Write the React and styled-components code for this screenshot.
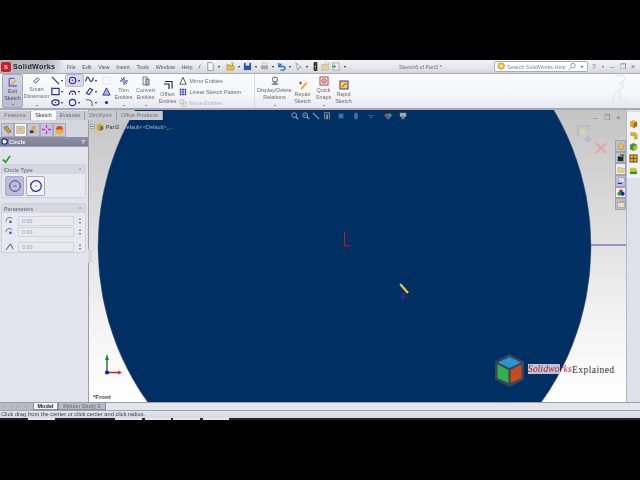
import React from "react";
import styled, { createGlobalStyle } from "styled-components";

const Global = createGlobalStyle`
  html, body { margin: 0; padding: 0; background: #000; }
  * { box-sizing: border-box; }
`;

const Screen = styled.div`
  width: 640px; height: 480px; background: #000; padding: 60px 0;
  font-family: "Liberation Sans", Arial, sans-serif; overflow: hidden;
`;
const Win = styled.div`
  height: 360px; display: flex; flex-direction: column; background: #d9dbe6; color: #4a4a55;
`;

/* ---------- title bar ---------- */
const TitleBar = styled.div`
  height: 14px; flex: none; display: flex; align-items: center; position: relative;
  background: linear-gradient(#f3f4f8, #e3e4ec 60%, #d4d5df);
  border-bottom: 1px solid #a9abb6; filter: blur(.25px);
  & > * { flex: none; }
`;
const Logo = styled.div`
  width: 63px; height: 13px; display: flex; align-items: center; gap: 2px; padding-left: 1px;
  background: linear-gradient(90deg, #b5b5bb, #bbbcc3 75%, #e4e5ec);
  font-weight: 700; font-size: 7.2px; letter-spacing: .3px; color: #2a2a30;
`;
const LogoMark = styled.span`
  width: 10px; height: 10px; background: #c6242a; border-radius: 2px; color: #fff; flex: none;
  font: 700 7px "Liberation Serif", serif; text-align: center; line-height: 10px;
`;
const Menu = styled.div`
  display: flex; margin-left: 4px; font-size: 5.4px; color: #56565f; gap: 6.6px; width: 127.5px;
`;
const QuickBar = styled.div`
  display: flex; align-items: center; height: 13px;
`;
const QuickIcon = styled.span`
  display: inline-flex; flex: none; width: ${p => p.$w || 9}px; height: 11px; align-items: center; justify-content: ${p => p.$start ? "flex-end" : "center"};
  margin-left: ${p => p.$ml || 0}px; padding-right: ${p => p.$start ? 2 : 0}px;
`;
const Arrow = styled.i`
  display: inline-block; flex: none; width: 0; height: 0; border: 1px solid transparent; border-top: 2px solid #222;
  margin: 2px 3px 0;
`;
const DocTitle = styled.div`
  font-size: 5.3px; color: #70707a; margin-left: 50.5px; width: 95px; white-space: nowrap;
`;
const Search = styled.div`
  width: 94px; height: 11px; background: #fff; border: 1px solid #a9acb9; border-radius: 2px;
  display: flex; align-items: center; gap: 2px; padding: 0 1px 0 2px; font-size: 5.4px; color: #85858f;
`;
const SearchText = styled.span` flex: 1; white-space: nowrap; `;
const WinButtons = styled.div`
  display: flex; align-items: center; margin-left: 2px; font-size: 7px; color: #6c6c78; line-height: 1; white-space: nowrap;
`;
const WinBtn = styled.span`
  width: ${p => p.$w}px; text-align: center; font-size: ${p => p.$fs || 7}px; flex: none;
`;

/* ---------- ribbon ---------- */
const Ribbon = styled.div`
  height: 36px; flex: none; display: flex; position: relative; padding-left: 2px;
  background: linear-gradient(#fbfbfd, #f5f6fa 60%, #e7e8f0);
  border-bottom: 2px solid #a7a8b2; color: #6c6c76; font-size: 5.4px; filter: blur(.2px);
`;
const Tool = styled.div`
  width: ${p => p.$w}px; display: flex; flex-direction: column; align-items: center; text-align: center;
  line-height: 7px; padding-top: ${p => p.$low ? 6 : 2}px; flex: none; position: relative; margin-left: ${p => p.$ml || 0}px;
  & > svg { margin-bottom: 1px; }
  ${p => p.$active && `
    background: linear-gradient(#d4d6e6, #b9bcd2); border: 1px solid #a6a9c0; border-radius: 2px; padding-top: 1px; color:#4b4b58;
  `}
  ${p => p.$rule && `border-right: 1px solid #dcdde4;`}
`;
const ToolLabel = styled.span` display:block; white-space: nowrap; `;
const ToolDrop = styled.i`
  position: absolute; bottom: 1px; left: 50%; margin-left: -1px; width: 0; height: 0;
  border: 1.2px solid transparent; border-top: 1.6px solid #333;
`;
const SketchGrid = styled.div`
  width: 64.5px; display: grid; grid-template-columns: 17px 17px 17px 13.5px; grid-auto-rows: 11px; padding-top: 1px; flex:none;
`;
const SketchCell = styled.div`
  display: flex; align-items: center; gap: 0; padding-left: 2px;
  ${p => p.$on && `background:#d6d9e8; outline: 1px solid #b6b9cc; border-radius:1px;`}
  & > i { margin: 2px 0 0 1px; }
`;
const Side = styled.div`
  width: 72px; flex: none; display: grid; grid-auto-rows: 11px; padding-top: 1px; position: relative; margin-left: 1px;
`;
const SideRow = styled.div`
  display: flex; align-items: center; gap: 3px; white-space: nowrap; color: ${p => p.$off ? "#b4b4bc" : "#6a6a75"};
`;
const DsMark = styled.div`
  position: absolute; right: 7px; top: 0; width: 30px; height: 34px;
`;

/* ---------- middle ---------- */
const Middle = styled.div` flex: 1; display: flex; min-height: 0; position: relative; `;
const Panel = styled.div`
  width: 88px; flex: none; background: #e2e3ec; display: flex; flex-direction: column; position: relative; filter: blur(.2px);
`;
const TabsOver = styled.div`
  position: absolute; left: 0; top: 1px; height: 9px; width: 163px; background: #c9cad2; display: flex; z-index: 3;
  font-size: 5.4px; color: #70707a; filter: blur(.2px);
`;
const MgrTab = styled.div`
  height: 9px; line-height: 9px; text-align:center; white-space: nowrap;
  ${p => p.$on ? "background:#fbfbfd;color:#33333b;font-weight:400;" : "border-right:1px solid #9fa0aa;"}
  width: ${p => p.$w}px;
`;
const MgrIcons = styled.div`
  margin-top: 10px; height: 17px; display: flex; align-items: center; padding: 2px 1px 0; background: #d5d6e0;
`;
const MgrIcon = styled.div`
  width: 13px; height: 14px; display: flex; align-items: center; justify-content: center; background: #c6c7d6;
  border: 1px solid #a9aabb;
  ${p => p.$on && "background:#f4f4f8;"}
`;
const PanelHead = styled.div`
  height: 10px; background: linear-gradient(#8f90a3, #7e7f94); display: flex; align-items: center; gap: 1px;
  font-size: 6px; font-weight: 700; color: #f2f2f6; padding: 0 3px 0 1px; justify-content: space-between; border-bottom: 1px solid #9c9dad;
`;
const HeadLeft = styled.span` display:flex; align-items:center; gap:1px; `;
const OkRow = styled.div` height: 17px; padding: 3px 2px; `;
const Group = styled.div`
  margin: 0 2px 5px 1px; height: ${p => p.$h}px; background: #e8e9f0; border: 1px solid #d0d1dc; border-radius: 2px;
`;
const GroupHead = styled.div`
  height: 9px; background: #d6d7e1; font-size: 5.4px; font-weight: 700; color: #7c7c88;
  display: flex; justify-content: space-between; align-items:center; padding: 0 3px 0 2px;
`;
const TypeRow = styled.div` display: flex; gap: 2px; padding: 2px 3px; `;
const TypeBtn = styled.div`
  width: 19px; height: 20px; border: 1px solid #a8aabf; border-radius: 2px; display:flex; align-items:center; justify-content:center;
  background: ${p => p.$on ? "#bcbfd6" : "#f2f2f7"};
`;
const ParamRow = styled.div`
  display: flex; align-items: center; height: ${p => p.$h || 11}px; padding-left: 3px; margin-top: ${p => p.$mt || 0}px;
`;
const ParamIcon = styled.div` width: 13px; display:flex; `;
const ParamInput = styled.div`
  width: 56px; height: 10px; background: #e9e9ef; border: 1px solid #d3d4dc; font-size: 5.4px; color: #9a9aa4; line-height: 8px; padding-left: 3px;
`;
const Spin = styled.div`
  margin-left: 3px; font-size: 4px; line-height: 4px; color: #666; text-align: center; width: 6px;
`;
const Splitter = styled.div`
  width: 1px; background: #9b9ca6; flex: none; position: relative;
`;
const Grip = styled.div`
  position: absolute; left: 0; top: 139px; width: 4px; height: 14px; background: #d8d9e0;
  border-radius: 0 2px 2px 0; z-index: 2;
`;

const Canvas = styled.div`
  flex: 1; position: relative; overflow: hidden; background: linear-gradient(#c4c4c4 0%, #dedede 40%, #f2f2f2 70%, #fff 100%);
`;
const Shapes = styled.svg` position: absolute; left: 0; top: 0; `;
const Tree = styled.div`
  position: absolute; left: 1px; top: 12px; height: 9px; display:flex; align-items:center; gap: 1px; font-size: 5.4px; color: #aab4c4; z-index: 2; white-space: nowrap; filter: blur(.2px);
`;
const TreeName = styled.span` margin-left: 1px; color: #30303a; `;
const TreeConfig = styled.span` margin-left: 1px; `;
const HeadsUp = styled.div`
  position: absolute; top: 2px; left: 201px; display: flex; align-items: center; filter: blur(.25px);
`;
const HudIcon = styled.span` width: ${p => p.$w || 10.6}px; display:flex; justify-content:center; `;
const ViewButtons = styled.div`
  position: absolute; right: 2px; top: 3px; display: flex; font-size: 7px; color: #75757f; align-items:center; line-height: 9px;
`;
const ViewBtn = styled.span` width: 11.5px; text-align: center; `;
const RailTabs = styled.div`
  position: absolute; right: 0; top: 30px; width: 11px; display: flex; flex-direction: column; z-index: 2;
`;
const RailTab = styled.div`
  width: 11px; height: 11.7px; background: ${p => p.$on ? "#eceef4" : "#bcbfd0"}; border: 1px solid #9fa2b5; display:flex; align-items:center; justify-content:center;
`;
const FrontLabel = styled.div`
  position: absolute; left: 4px; bottom: 1px; font-size: 6px; font-weight: 700; color: #44444c; line-height: 8px;
`;
const Watermark = styled.div`
  position: absolute; left: 405px; top: 243px; display:flex; align-items:center; height: 34px;
`;
const MarkSolid = styled.span`
  font: italic 400 9.5px "Liberation Serif", serif; color: #c4152b; margin: -2px 0 0 3px; background: linear-gradient(90deg,#b9c6d8 72%,transparent 72%);
  letter-spacing: .15px; width: 44px; white-space: nowrap;
`;
const MarkWord = styled.span`
  font: 400 9.6px "Liberation Serif", serif; color: #333; letter-spacing: .4px; white-space: nowrap; margin-top: -2px;
`;

const TaskPane = styled.div`
  width: 14px; flex: none; background: #dfe1ea; border-left: 1px solid #b6b8c4; padding-top: 2px;
`;
const TaskStrip = styled.div`
  height: 66px; background: #f2f3f7; display: flex; flex-direction: column; align-items: center; padding-top: 6px;
`;
const TaskIcon = styled.div` height: 11.6px; display:flex; align-items:center; `;

/* ---------- bottom ---------- */
const BottomTabs = styled.div`
  height: 8px; flex: none; background: #e4e5ec; display: flex; border-top: 1px solid #9c9da8; font-size: 5.6px; filter: blur(.2px); padding-right: 14px;
`;
const Pager = styled.div` width: 33px; background: #b9bac4; color:#9a9aa6; font-size: 4px; line-height:7px; letter-spacing:2.2px; padding-left: 2px; `;
const BottomTab = styled.div`
  width: ${p => p.$w}px; text-align: center; line-height: 7px; white-space: nowrap;
  background: ${p => p.$on ? "#f6f6f9" : "#b9bac4"}; color: ${p => p.$on ? "#222" : "#666670"}; font-weight: ${p => p.$on ? 700 : 400};
  border: 1px solid #8d8e9a; border-top: 0;
`;
const Status = styled.div`
  height: 10px; flex: none; background: linear-gradient(#e3e4ec,#d6d7e1 80%); border-top: 1px solid #a0a1ac; font-size: 5.7px; color: #3f3f49;
  line-height: 7px; padding-left: 1px; white-space: nowrap; filter: blur(.2px); position: relative;
`;
const StatusCells = styled.div`
  position: absolute; left: 0; right: 0; bottom: 0; height: 2px; display:flex; background:#23242c;
`;
const StatusCell = styled.i` width: ${p => p.$w}px; margin-left: ${p => p.$ml}px; background: #e6e7ee; height: 2px; display:block; `;

/* ---------- drawn icons ---------- */
const Ic = ({ s = 9, children, vb = 10 }) => (
  <svg width={s} height={s} viewBox={`0 0 ${vb} ${vb}`} fill="none">{children}</svg>
);
const CircleCenter = ({ s = 9 }) => (
  <Ic s={s}><circle cx="5" cy="5" r="3.6" stroke="#23238f" strokeWidth="1.3" /><circle cx="5" cy="5" r="1" fill="#c63a46" /></Ic>
);
const Box3 = ({ a = "#e0b020", b = "#a86a10", s = 9 }) => (
  <Ic s={s}><path d="M1 3l4-2 4 2v5l-4 2-4-2z" fill={a} /><path d="M5 5l4-2v5l-4 2z" fill={b} /></Ic>
);
const Doc = ({ c = "#fff" }) => <Ic><path d="M2 .5h4l2 2v7H2z" fill={c} stroke="#8e8e98" /></Ic>;

const sketchIcons = [
  <Ic><path d="M1 1l8 8" stroke="#26269a" strokeWidth="1.2" /></Ic>,
  <CircleCenter />,
  <Ic><path d="M.5 6c2-6 3-6 4.500-2s3 2 4.500-2" stroke="#26269a" strokeWidth="1.200" /></Ic>,
  <Ic><rect x="1" y="1" width="8" height="8" stroke="#ccc" strokeDasharray="1 1" /></Ic>,
  <Ic><rect x="1" y="1.500" width="8" height="7" stroke="#26269a" strokeWidth="1.300" /><circle cx="1" cy="1.500" r=".9" fill="#c33" /></Ic>,
  <Ic><path d="M1.500 8.500a3.500 4 0 0 1 7 0" stroke="#26269a" strokeWidth="1.300" /><circle cx="5" cy="8" r="1" fill="#c33" /></Ic>,
  <Ic><path d="M1.500 7l4-5.500 3 1.500-4 5.500z" stroke="#26269a" strokeWidth="1.200" /></Ic>,
  <Ic><path d="M5 1l4 8H1z" stroke="#26269a" fill="#a9b7e0" /></Ic>,
  <Ic><ellipse cx="5" cy="5" rx="4" ry="3" stroke="#26269a" strokeWidth="1.300" /><circle cx="5" cy="5" r=".9" fill="#c33" /></Ic>,
  <Ic><circle cx="5" cy="5" r="3.500" stroke="#26269a" strokeWidth="1.200" /></Ic>,
  <Ic><path d="M1 2h3a4 4 0 0 1 4 4v3" stroke="#555" strokeWidth="1.100" /></Ic>,
  <Ic><circle cx="5" cy="5" r="1.800" fill="#2a2ac8" /></Ic>,
];

const App = () => (
  <Screen>
    <Global />
    <Win>
      <TitleBar>
        <Logo><LogoMark>S</LogoMark>SolidWorks</Logo>
        <Menu><span>File</span><span>Edit</span><span>View</span><span>Insert</span><span>Tools</span><span>Window</span><span>Help</span></Menu>
        <QuickBar>
          <QuickIcon $w={11} $start><Ic s={6}><path d="M5 1L2 4l1 1L1 8" stroke="#666" /></Ic></QuickIcon>
          <QuickIcon><Doc /></QuickIcon><Arrow />
          <QuickIcon $ml={3}><Ic><path d="M1 3h3l1 1h4v5H1z" fill="#e4c13a" stroke="#a58a1c" strokeWidth=".6" /><path d="M6 0l2 2-2 2" stroke="#3a9a3a" /></Ic></QuickIcon><Arrow />
          <QuickIcon><Ic><rect x="1" y="1" width="8" height="8" fill="#2d54a8" /><rect x="3" y="1" width="4" height="3" fill="#dfe6f4" /></Ic></QuickIcon><Arrow />
          <QuickIcon><Ic><rect x="1" y="4" width="8" height="4" fill="#a6a8b0" /><rect x="3" y="1" width="4" height="3" fill="#eee" stroke="#999" strokeWidth=".5" /></Ic></QuickIcon><Arrow />
          <QuickIcon><Ic><path d="M2 1v4h5M2 5l3-3M7 5a2 2 0 0 1 0 4H4" stroke="#1f6ec4" strokeWidth="1.500" /></Ic></QuickIcon><Arrow />
          <QuickIcon><Ic><path d="M2 1l6 5-3 .5L4 9z" fill="#f4f4f6" stroke="#777" strokeWidth=".7" /></Ic></QuickIcon><Arrow />
          <QuickIcon><Ic><rect x="3" y="0" width="4" height="10" rx="1" fill="#222" /><circle cx="5" cy="2" r="1" fill="#d22" /><circle cx="5" cy="5" r="1" fill="#db2" /><circle cx="5" cy="8" r="1" fill="#2a2" /></Ic></QuickIcon>
          <QuickIcon $w={11}><Ic><rect x="1" y="3" width="7" height="6" fill="#e8cf9a" stroke="#998" strokeWidth=".5" /><path d="M5 0h4v3H5z" fill="#f6efd8" stroke="#998" strokeWidth=".5" /></Ic></QuickIcon>
          <QuickIcon $w={10}><Ic><rect x="2" y="1" width="7" height="8" fill="#e8edf0" stroke="#7a9a8a" strokeWidth=".7" /><path d="M1 5h4M3 3l2 2-2 2" stroke="#2a9a4a" /></Ic></QuickIcon><Arrow />
        </QuickBar>
        <DocTitle>Sketch6 of Part3 *</DocTitle>
        <Search>
          <Ic><circle cx="5" cy="4.500" r="4" fill="#e8c23a" stroke="#a78a20" strokeWidth=".6" /><circle cx="5" cy="4.500" r="1.500" fill="#fff6c8" /></Ic>
          <SearchText>Search SolidWorks Help</SearchText>
          <Ic><circle cx="6" cy="4" r="2.800" stroke="#8a8a94" /><path d="M4 6L1 9" stroke="#8a8a94" strokeWidth="1.200" /></Ic>
          <Arrow />
        </Search>
        <WinButtons><WinBtn $w={8}>?</WinBtn><WinBtn $w={10} $fs={4}>▾</WinBtn><WinBtn $w={9}>–</WinBtn><WinBtn $w={12}>❐</WinBtn><WinBtn $w={8}>×</WinBtn></WinButtons>
      </TitleBar>

      <Ribbon>
        <Tool $w={21} $active>
          <Ic s={11}><path d="M2 2h5M2 2v7h7" stroke="#4a4ad0" strokeWidth="1" /><path d="M3 8l5-5 1 1-5 5z" fill="#e8b820" /></Ic>
          <ToolLabel>Exit</ToolLabel><ToolLabel>Sketch</ToolLabel><ToolDrop />
        </Tool>
        <Tool $w={25} $ml={1}>
          <Ic s={9}><path d="M2 6l4-4 2 2-4 4z" fill="#fff" stroke="#26269a" strokeWidth="1" /></Ic>
          <ToolLabel>Smart</ToolLabel><ToolLabel>Dimension</ToolLabel><ToolDrop />
        </Tool>
        <SketchGrid>
          {sketchIcons.map((ic, i) => (
            <SketchCell key={i} $on={i === 1}>{ic}{i % 4 !== 3 && <Arrow />}</SketchCell>
          ))}
        </SketchGrid>
        <Tool $w={20}>
          <Ic s={10}><path d="M1 5h8M5 1v8M2 2l6 6" stroke="#26269a" /><path d="M3 4h4v2H3z" fill="#9ab" /></Ic>
          <ToolLabel>Trim</ToolLabel><ToolLabel>Entities</ToolLabel><ToolDrop />
        </Tool>
        <Tool $w={24}>
          <Ic s={10}><path d="M2 1h4v8H2z" fill="#e8ecf6" stroke="#555" strokeWidth=".7" /><path d="M5 3h3v6H5z" fill="#bcd" stroke="#335" strokeWidth=".7" /></Ic>
          <ToolLabel>Convert</ToolLabel><ToolLabel>Entities</ToolLabel><ToolDrop />
        </Tool>
        <Tool $w={20} $low>
          <Ic s={10}><path d="M2 1.500h7v7M1 4h5v5" stroke="#222" strokeWidth="1.100" /></Ic>
          <ToolLabel>Offset</ToolLabel><ToolLabel>Entities</ToolLabel>
        </Tool>
        <Side>
          <SideRow><Ic s={8}><path d="M5 .5l4 8.500H1z" stroke="#333" fill="#fff" /></Ic>Mirror Entities</SideRow>
          <SideRow><Ic s={8}><path d="M1 1h2v2H1zM4 1h2v2H4zM7 1h2v2H7zM1 4h2v2H1zM4 4h2v2H4zM7 4h2v2H7zM1 7h2v2H1zM4 7h2v2H4zM7 7h2v2H7z" fill="#23238f" /></Ic>Linear Sketch Pattern</SideRow>
          <SideRow $off><Ic s={8}><rect x="1" y="1" width="5" height="5" stroke="#bbb" /><rect x="4" y="4" width="5" height="5" stroke="#bbb" /></Ic>Move Entities</SideRow>
        </Side>
        <Tool $w={4} $rule />
        <Tool $w={38} $ml={1}>
          <Ic s={10}><circle cx="5" cy="3.500" r="2.500" stroke="#555" /><path d="M1 9h8L6 6H4z" fill="#8a8a94" /></Ic>
          <ToolLabel>Display/Delete</ToolLabel><ToolLabel>Relations</ToolLabel><ToolDrop />
        </Tool>
        <Tool $w={18} $low>
          <Ic s={10}><path d="M1 3h3M2.500 1.500v3" stroke="#d22" strokeWidth="1" /><path d="M3 8l5-6 1.500 1-5 6-2 .5z" fill="#e8a820" /></Ic>
          <ToolLabel>Repair</ToolLabel><ToolLabel>Sketch</ToolLabel>
        </Tool>
        <Tool $w={22} $ml={1}>
          <Ic s={10}><rect x="1" y="1" width="8" height="8" fill="#fff" stroke="#a44" /><circle cx="5" cy="5" r="2.200" stroke="#c22" /><circle cx="5" cy="5" r=".7" fill="#333" /></Ic>
          <ToolLabel>Quick</ToolLabel><ToolLabel>Snaps</ToolLabel><ToolDrop />
        </Tool>
        <Tool $w={18} $low>
          <Ic s={10}><rect x="1" y="1" width="8" height="8" fill="#f4d440" stroke="#3a3aa0" /><path d="M3 7l4-4" stroke="#a33" /></Ic>
          <ToolLabel>Rapid</ToolLabel><ToolLabel>Sketch</ToolLabel>
        </Tool>
        <DsMark>
          <svg width="30" height="34" viewBox="0 0 30 34" fill="none">
            <path d="M12 2c10-2 12 2 7 7M15 9c8 1 7 5-2 9M12 18l-3 14M18 18c-4 5-2 7 3 8s4 5-4 6" stroke="#e6e7ee" strokeWidth="1.500" />
          </svg>
        </DsMark>
      </Ribbon>

      <Middle>
        <TabsOver>
          <MgrTab $w={31}>Features</MgrTab>
          <MgrTab $w={25} $on>Sketch</MgrTab>
          <MgrTab $w={29}>Evaluate</MgrTab>
          <MgrTab $w={32}>DimXpert</MgrTab>
          <MgrTab $w={46}>Office Products</MgrTab>
        </TabsOver>
        <Panel>
          <MgrIcons>
            <MgrIcon><Ic><path d="M1 3l3-2 5 6-3 2z" fill="#c9a030" stroke="#443" strokeWidth=".6" /></Ic></MgrIcon>
            <MgrIcon $on><Ic><rect x="1" y="2" width="8" height="7" fill="#f0d8a0" stroke="#776" strokeWidth=".6" /><path d="M3 4h4M3 6h4" stroke="#776" strokeWidth=".6" /></Ic></MgrIcon>
            <MgrIcon><Ic><path d="M3 1h4v4H3z" fill="#d9a820" /><path d="M1 6h4v3H1z" fill="#333" /><path d="M6 6h3v3H6z" fill="#bbb" /></Ic></MgrIcon>
            <MgrIcon><Ic><path d="M5 0v10M0 5h10" stroke="#c02ac0" strokeWidth="1.400" /><circle cx="5" cy="5" r="2" fill="#e6a0e6" /></Ic></MgrIcon>
            <MgrIcon><Ic><circle cx="5" cy="5" r="4" fill="#d43" /><path d="M1 5h8v1a4 4 0 0 1-8 0z" fill="#e8b820" /></Ic></MgrIcon>
          </MgrIcons>
          <PanelHead>
            <HeadLeft><Ic s={7}><circle cx="5" cy="5" r="3.800" stroke="#1d1d9a" strokeWidth="1.800" fill="#fff" /></Ic>Circle</HeadLeft><span>?</span>
          </PanelHead>
          <OkRow><Ic s={9}><path d="M1 5l3 3 5-7" stroke="#2f9e32" strokeWidth="2" /></Ic></OkRow>
          <Group $h={34}>
            <GroupHead>Circle Type<span>⌃</span></GroupHead>
            <TypeRow>
              <TypeBtn $on><Ic s={14}><circle cx="5" cy="5" r="3.800" stroke="#3c3cb0" strokeWidth=".7" /><path d="M4 5h2" stroke="#c03030" strokeWidth=".7" /></Ic></TypeBtn>
              <TypeBtn><Ic s={14}><circle cx="5" cy="5" r="3.800" stroke="#2222b0" strokeWidth=".8" /><circle cx="5" cy="5" r=".6" fill="#888" /><circle cx="1.500" cy="3.500" r=".7" fill="#c22" /><circle cx="8.800" cy="5" r=".7" fill="#2a2" /><circle cx="3" cy="8.500" r=".7" fill="#2a2" /></Ic></TypeBtn>
            </TypeRow>
          </Group>
          <Group $h={50}>
            <GroupHead>Parameters<span>⌃</span></GroupHead>
            <ParamRow $mt={2}><ParamIcon><Ic s={9}><path d="M1 6a4 4 0 0 1 7-3" stroke="#666" /><circle cx="6" cy="6.500" r="1.500" fill="#3a62c4" /></Ic></ParamIcon><ParamInput>0.00</ParamInput><Spin>▴<br />▾</Spin></ParamRow>
            <ParamRow><ParamIcon><Ic s={9}><path d="M1 6a4 4 0 0 1 7-3" stroke="#666" /><circle cx="6" cy="6.500" r="1.500" fill="#3a62c4" /></Ic></ParamIcon><ParamInput>0.00</ParamInput><Spin>▴<br />▾</Spin></ParamRow>
            <ParamRow $mt={4}><ParamIcon><Ic s={9}><path d="M1 9L6 2l3 6" stroke="#444" /></Ic></ParamIcon><ParamInput>0.00</ParamInput><Spin>▴<br />▾</Spin></ParamRow>
          </Group>
        </Panel>
        <Splitter><Grip /></Splitter>
        <Canvas>
          <Shapes width="538" height="292" viewBox="0 0 538 292" fill="none">
            <ellipse cx="255.500" cy="136.600" rx="246.500" ry="258.500" fill="#002f63" stroke="#4a5a78" strokeWidth=".5" />
            <path d="M502 135h36" stroke="#3b4fa0" strokeWidth="1" />
            <path d="M255.500 122v14h6" stroke="#c8142c" strokeWidth="1" />
            <path d="M312 175l7 8" stroke="#e8c030" strokeWidth="2.400" /><path d="M311 174l1.500 1.500" stroke="#bbb" strokeWidth="2" />
            <path d="M319.500 184l1 1" stroke="#222" strokeWidth="1.500" />
            <circle cx="314" cy="186" r="2.500" stroke="#1a2ab8" strokeWidth="1" />
            <path d="M314 183v5" stroke="#b52a2a" strokeWidth=".7" />
            {/* triad */}
            <path d="M18 262.500v-13" stroke="#2a7a2a" strokeWidth="1.500" />
            <path d="M18 244l-2 6h4z" fill="#1f8a2a" />
            <path d="M18 262.500h12" stroke="#c4262a" strokeWidth="1.500" />
            <path d="M33 262.500l-4-2v4z" fill="#c4262a" />
            <circle cx="18" cy="262.500" r="2" fill="#1414a0" />
            {/* faint confirmation corner */}
            <path d="M489 26V16h11v4" stroke="#b4b8cc" strokeWidth="1.500" />
            <circle cx="493.500" cy="21.500" r="3" fill="#dcd3ae" />
            <path d="M499 25l4 4-4 4-4-4z" fill="#c0b4cc" />
            <path d="M507 33l10 10M517 33l-10 10" stroke="#e6a2aa" strokeWidth="2" />
          </Shapes>
          <Tree>
            <Ic s={5}><rect x=".5" y=".5" width="9" height="9" fill="#ddd" stroke="#888" /><path d="M2 5h6" stroke="#333" /></Ic>
            <Box3 s={8} a="#d8a818" b="#48843a" />
            <TreeName>Part3</TreeName><TreeConfig>(Default&lt;&lt;Default&gt;_...</TreeConfig>
          </Tree>
          <HeadsUp>
            <HudIcon><Ic s={8}><circle cx="4" cy="4" r="3" stroke="#a9b4c8" /><path d="M6 6l3 3" stroke="#a9b4c8" strokeWidth="1.400" /></Ic></HudIcon>
            <HudIcon><Ic s={8}><circle cx="4" cy="4" r="3" stroke="#a9b4c8" /><path d="M6 6l3 3" stroke="#a9b4c8" strokeWidth="1.400" /><path d="M3 4h2" stroke="#d0d6e4" /></Ic></HudIcon>
            <HudIcon><Ic s={8}><path d="M1 1l8 8" stroke="#8ea2c8" strokeWidth="1.300" /></Ic></HudIcon>
            <HudIcon><Ic s={8}><path d="M2 9V1h6v8" stroke="#6a88c0" strokeWidth="1.300" /><path d="M4 3h2v6H4z" fill="#c4a840" /></Ic></HudIcon>
            <HudIcon $w={17}><Ic s={6}><rect x="1" y="1" width="8" height="8" fill="#3f6eb4" /></Ic></HudIcon>
            <HudIcon $w={13}><Ic s={8}><ellipse cx="5" cy="5" rx="2.500" ry="4.500" fill="#3a6cb0" /></Ic></HudIcon>
            <HudIcon $w={18}><Ic s={6}><path d="M1 4h3M6 4h3M3 7h4" stroke="#7f95ba" strokeWidth="1.200" /></Ic></HudIcon>
            <HudIcon $w={16}><Ic s={8}><circle cx="3" cy="4" r="2.500" fill="#b04040" /><circle cx="7" cy="4" r="2.500" fill="#3fa050" /><circle cx="5" cy="7" r="2.500" fill="#4060c0" /></Ic></HudIcon>
            <HudIcon $w={14}><Ic s={8}><rect x="1" y="1" width="8" height="5" fill="#a8a89c" /><path d="M3 6h4v3H3z" fill="#6e7a88" /></Ic></HudIcon>
          </HeadsUp>
          <ViewButtons><ViewBtn>–</ViewBtn><ViewBtn>❐</ViewBtn><ViewBtn>×</ViewBtn></ViewButtons>
          <RailTabs>
            <RailTab><Ic s={8}><path d="M5 1l4 4H8v4H2V5H1z" fill="#e8c050" stroke="#a67a20" strokeWidth=".6" /></Ic></RailTab>
            <RailTab><Ic s={8}><rect x="1" y="3" width="7" height="6" fill="#222" /><path d="M4 0h5v4H4z" fill="#4a8a3a" /></Ic></RailTab>
            <RailTab $on><Ic s={8}><path d="M1 3h3l1 1h4v5H1z" fill="#efd27a" stroke="#b09a4a" strokeWidth=".6" /></Ic></RailTab>
            <RailTab><Ic s={8}><rect x="2" y="1" width="7" height="6" fill="#dde" stroke="#889" strokeWidth=".5" /><path d="M1 8h5" stroke="#2222c0" strokeWidth="1.500" /></Ic></RailTab>
            <RailTab $on><Ic s={8}><circle cx="5" cy="3" r="2.500" fill="#c22" /><circle cx="3" cy="6" r="2.500" fill="#2a2" /><circle cx="7" cy="6" r="2.500" fill="#22c" /></Ic></RailTab>
            <RailTab><Ic s={8}><rect x="1" y="3" width="8" height="6" fill="#e6dcc8" stroke="#887" strokeWidth=".5" /><path d="M3 1h6v2H3z" fill="#c9a26a" /></Ic></RailTab>
          </RailTabs>
          <FrontLabel>*Front</FrontLabel>
          <Watermark>
            <svg width="31" height="33" viewBox="0 0 31 33">
              <path d="M15.500 0L30 7.500v18L15.500 33 1 25.500v-18z" fill="#38465a" />
              <path d="M15.500 3L27 8.500 15.500 14 4 8.500z" fill="#2a93d2" />
              <path d="M3.500 10.500L14.500 16v13L3.500 24z" fill="#33b04a" />
              <path d="M27.500 10.500L16.500 16v13l11-5z" fill="#c84a1c" />
            </svg>
            <MarkSolid>Solidworks</MarkSolid>
            <MarkWord>Explained</MarkWord>
          </Watermark>
        </Canvas>
        <TaskPane>
          <TaskStrip>
            <TaskIcon><Box3 /></TaskIcon>
            <TaskIcon><Ic s={9}><path d="M2 2h5l2 2v5H6V5H2z" fill="#e6b818" stroke="#9a7a14" strokeWidth=".5" /></Ic></TaskIcon>
            <TaskIcon><Box3 a="#3a9a3a" b="#d8b020" /></TaskIcon>
            <TaskIcon><Ic s={9}><rect x="1" y="1" width="8" height="8" fill="#e0b030" stroke="#6a4a18" /><path d="M5 1v8M1 5h8" stroke="#6a4a18" /></Ic></TaskIcon>
            <TaskIcon><Ic s={9}><path d="M1 2h6l2 2v2H1z" fill="#e4c020" /><path d="M1 6h8v3H1z" fill="#2f9a34" /></Ic></TaskIcon>
          </TaskStrip>
        </TaskPane>
      </Middle>

      <BottomTabs>
        <Pager>◂ ◂ ▸ ▸</Pager>
        <BottomTab $w={25} $on>Model</BottomTab>
        <BottomTab $w={48}>Motion Study 1</BottomTab>
      </BottomTabs>
      <Status>
        Click drag from the center or click center and click radius.
        <StatusCells><StatusCell $ml={28} $w={27} /><StatusCell $ml={60} $w={27} /><StatusCell $ml={3} $w={26} /><StatusCell $ml={2} $w={27} /><StatusCell $ml={3} $w={26} /></StatusCells>
      </Status>
    </Win>
  </Screen>
);

export default App;
